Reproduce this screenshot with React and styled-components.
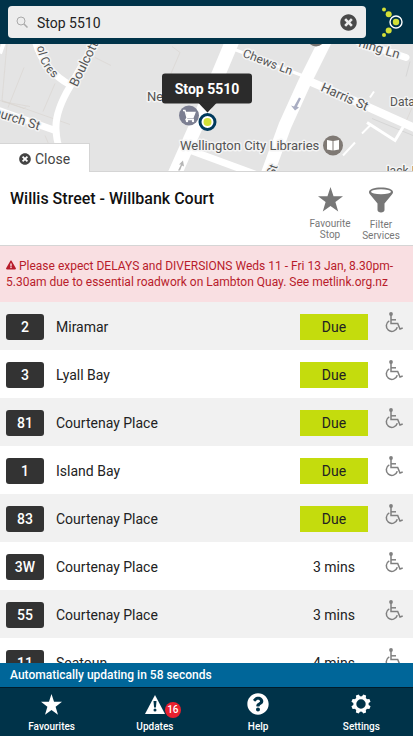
import React, { useState } from 'react'
import styled, { createGlobalStyle } from 'styled-components'
import { FaTimesCircle, FaExclamationTriangle, FaQuestionCircle } from 'react-icons/fa'

const departures = [
    { service: '2', destination: 'Miramar', time: 'Due' },
    { service: '3', destination: 'Lyall Bay', time: 'Due' },
    { service: '81', destination: 'Courtenay Place', time: 'Due' },
    { service: '1', destination: 'Island Bay', time: 'Due' },
    { service: '83', destination: 'Courtenay Place', time: 'Due' },
    { service: '3W', destination: 'Courtenay Place', time: '3 mins' },
    { service: '55', destination: 'Courtenay Place', time: '3 mins' },
    { service: '11', destination: 'Seatoun', time: '4 mins' },
]

function StarIcon({ size }) {
    return (
        <svg width={size} height={size} viewBox="0 0 24 24" fill="currentColor" aria-hidden="true">
            <path d="M12 0l2.900 8.900H24l-7.300 5.600 2.700 9.100L12 18.200l-7.400 5.400 2.700-9.100L0 8.900h9.100z" />
        </svg>
    )
}

function FunnelIcon() {
    return (
        <svg width="26" height="26" viewBox="0 0 26 26" aria-hidden="true">
            <path d="M1 5C1 2.500 6 .5 13 .5S25 2.500 25 5c0 1.300-.6 2-1.500 3l-7 8.500V23c0 1.500-1.500 2.500-3.500 2.500S9.500 24.500 9.500 23v-6.500l-7-8.500C1.600 7 1 6.300 1 5z" fill="currentColor" />
            <ellipse cx="13" cy="4.700" rx="10" ry="2.500" fill="#fff" />
        </svg>
    )
}

function WheelchairIcon() {
    return (
        <svg width="18" height="21" viewBox="0 0 18 21" fill="none" stroke="currentColor" strokeWidth="1.500" role="img" aria-label="Wheelchair accessible">
            <circle cx="6" cy="2" r="1.900" fill="currentColor" stroke="none" />
            <path d="M6 3v8.500h6.700l2.300 5.500 2.700-1" />
            <path d="M6 7.800h5" />
            <path d="M4.300 8.800a5.600 5.600 0 1 0 8 6.500" />
        </svg>
    )
}

function WarningIcon() {
    return (
        <svg width="20" height="19" viewBox="0 0 20 19" aria-hidden="true">
            <path d="M10 0l10 19H0z" fill="currentColor" />
            <path d="M8.500 6h3l-.6 6.500H9.100z" fill="#003349" />
            <circle cx="10" cy="15" r="1.500" fill="#003349" />
        </svg>
    )
}

function GearIcon() {
    return (
        <svg width="20" height="20" viewBox="-10 -10 20 20" aria-hidden="true">
            <circle r="6.200" fill="none" stroke="currentColor" strokeWidth="3" />
            {[22.5, 67.5, 112.5, 157.5, 202.5, 247.5, 292.5, 337.5].map((angle) => (
                <path key={angle} d="M-2.200-7l.7-2.700h3l.7 2.700z" fill="currentColor" transform={`rotate(${angle})`} />
            ))}
        </svg>
    )
}

function SearchIcon() {
    return (
        <svg width="12" height="12" viewBox="0 0 12 12" fill="none" stroke="#aaa" aria-hidden="true">
            <circle cx="5" cy="5" r="4" />
            <path d="M8 8l3.500 3.500" strokeWidth="1.500" />
        </svg>
    )
}

function Logo() {
    return (
        <svg width="22" height="32" viewBox="0 0 22 32" aria-hidden="true">
            <g fill="#d3e037">
                <circle cx="3" cy="3.500" r="2" />
                <circle cx="7.700" cy="8.300" r="3" />
                <circle cx="15" cy="16" r="3.200" />
                <circle cx="7.700" cy="24.500" r="3" />
                <circle cx="3" cy="29" r="2" />
            </g>
            <circle cx="15" cy="16" r="6" fill="none" stroke="#fff" strokeWidth="1.400" />
        </svg>
    )
}

function StopMap() {
    return (
        <MapSvg viewBox="0 44 413 128" preserveAspectRatio="xMidYMid slice" role="img" aria-label="Map">
            <rect y="44" width="413" height="128" fill="#e4e4e4" />

            <g fill="none" stroke="#d9d4ce">
                <path d="M0 101l24 8 2-2M7 44L2 101l68 24M24 68l-16 40M2 102l28 5M40 44l-5 10M95 58l16 8M172 47l8 6-12 28M45 136l6 14M55 84l-12 28M413 106l-7 16" opacity=".6" />
                <path d="M372 119l41 17M410 62l-4 15" stroke="#d6d6d6" />
            </g>

            <g fill="none" stroke="#fff">
                <path d="M97 40L70 87Q55 112 56 130T62 150" strokeWidth="7" />
                <path d="M35 40Q42 70 71 86" strokeWidth="7" />
                <path d="M0 54l5-14" strokeWidth="4" />
                <path d="M-4 110L58 132" strokeWidth="7" />
                <path d="M233 40L207 102 174 176" strokeWidth="14" />
                <path d="M326 40L304 84 285 126 266 178" strokeWidth="13" />
                <path d="M310 82l28 12 80 36" strokeWidth="8" />
                <path d="M232 49l70 27" strokeWidth="3" />
                <path d="M358 42l48 16" strokeWidth="7" strokeLinecap="round" />
                <path d="M188 150l68 25" strokeWidth="7" />
                <path d="M367 123l28 18 9-15" strokeWidth="3" />
                <path d="M343 156l12-13M362 134l9-9M370 98l4-6" strokeWidth="2" />
            </g>

            <path d="M299 98l-5 9-3-1 4 5 4-3-2-1 4-8z" fill="#a9adc2" />
            <path d="M178 171l3-6-2 0 4-4 1 6-2-1-2 5z" fill="#b5b5b5" />

            <MapLabels>
                <path id="crescent" d="M37 47Q40 70 58 82" fill="none" stroke="none" />
                <text transform="translate(77 88) rotate(-64)" fontSize="13">Boulcott</text>
                <text fontSize="12"><textPath href="#crescent">ol Cres</textPath></text>
                <text transform="translate(-7 116) rotate(18)" fontSize="13">hurch St</text>
                <text transform="translate(242 57) rotate(21)" fontSize="12">Chews Ln</text>
                <text transform="translate(320 91) rotate(24)" fontSize="13">Harris St</text>
                <text transform="translate(358 47) rotate(17)" fontSize="13">ning Ln</text>
                <text transform="translate(274 177) rotate(-70)" fontSize="12">St</text>
                <text x="147" y="101" fontSize="13">New</text>
                <text x="390" y="106" fontSize="12">Datacom</text>
                <text x="180" y="150" fontSize="13">Wellington City Libraries</text>
                <text x="383" y="175" fontSize="12">Jack Ilott</text>
            </MapLabels>

            <circle cx="316" cy="38" r="9" fill="#777370" />
            <circle cx="189" cy="116" r="10" fill="#7c7f92" />
            <path d="M183 111h2l2 7h6l2-5h-9M187 118l-1 2h8" fill="none" stroke="#fff" strokeWidth="1.300" />
            <path d="M186 113h9l-2 5h-6z" fill="#fff" />
            <circle cx="187" cy="121.500" r="1.200" fill="#fff" />
            <circle cx="193" cy="121.500" r="1.200" fill="#fff" />
            <circle cx="333" cy="146" r="10" fill="#7f7974" />
            <path d="M327 140.500l5.500 1v9.500l-5.500-1zM339 140.500l-5.500 1v9.500l5.500-1z" fill="#fff" />

            <circle cx="207.500" cy="122.500" r="7.500" fill="#fff" stroke="#003a5d" strokeWidth="3" />
            <circle cx="207.500" cy="122.500" r="4" fill="#d3e037" />
            <rect x="162" y="74" width="90" height="30" rx="3" fill="#2b2b2b" />
            <path d="M198 103l9.500 10 9.500-10z" fill="#2b2b2b" />
            <TooltipText x="207" y="94">Stop 5510</TooltipText>
        </MapSvg>
    )
}

function App() {
    const [stop, setStop] = useState('Stop 5510')

    return (
        <>
            <GlobalStyle />
            <Screen>
                <Header>
                    <SearchBox>
                        <SearchIcon />
                        <SearchInput aria-label="Search" value={stop} onChange={(e) => setStop(e.target.value)} />
                        <ClearButton aria-label="Clear" onClick={() => setStop('')}>
                            <FaTimesCircle size={17} />
                        </ClearButton>
                    </SearchBox>
                    <Logo />
                </Header>

                <MapArea>
                    <StopMap />
                    <CloseButton>
                        <FaTimesCircle size={12} />
                        Close
                    </CloseButton>
                </MapArea>

                <StopHeader>
                    <h1>Willis Street - Willbank Court</h1>
                    <StopAction>
                        <StarIcon size={25} />
                        Favourite Stop
                    </StopAction>
                    <StopAction>
                        <FunnelIcon />
                        Filter Services
                    </StopAction>
                </StopHeader>

                <Alert>
                    <FaExclamationTriangle size={10} /> Please expect DELAYS and DIVERSIONS Weds 11 - Fri 13 Jan, 8.30pm-5.30am due to essential roadwork on Lambton Quay. See metlink.org.nz
                </Alert>

                <Departures>
                    <DepartureTable aria-label="Departures">
                        <tbody>
                            {departures.map(({ service, destination, time }) => (
                                <DepartureRow key={service}>
                                    <ServiceCell><ServiceBadge>{service}</ServiceBadge></ServiceCell>
                                    <td>{destination}</td>
                                    <TimeCell><Time $due={time === 'Due'}>{time}</Time></TimeCell>
                                    <AccessCell><WheelchairIcon /></AccessCell>
                                </DepartureRow>
                            ))}
                        </tbody>
                    </DepartureTable>
                </Departures>

                <UpdateBar>Automatically updating in 58 seconds</UpdateBar>

                <Nav>
                    <NavLink href="#favourites">
                        <NavIcon><StarIcon size={21} /></NavIcon>
                        Favourites
                    </NavLink>
                    <NavLink href="#updates">
                        <NavIcon>
                            <WarningIcon />
                            <CountBadge>16</CountBadge>
                        </NavIcon>
                        Updates
                    </NavLink>
                    <NavLink href="#help">
                        <NavIcon><FaQuestionCircle size={22} /></NavIcon>
                        Help
                    </NavLink>
                    <NavLink href="#settings">
                        <NavIcon><GearIcon /></NavIcon>
                        Settings
                    </NavLink>
                </Nav>
            </Screen>
        </>
    )
}

const GlobalStyle = createGlobalStyle`
    * {
        box-sizing: border-box;
    }
    body {
        margin: 0;
        font-family: Roboto, sans-serif;
        font-size: 14px;
        color: #222;
        background: #fff;
    }
    button, input {
        font: inherit;
        color: inherit;
        border: 0;
        padding: 0;
        background: none;
    }
    svg {
        flex-shrink: 0;
    }
`;

const Screen = styled.div`
    display: flex;
    flex-direction: column;
    height: 100vh;
    overflow: hidden;
`;

const Header = styled.header`
    display: flex;
    align-items: center;
    gap: 15px;
    padding: 6px 10px 6px 8px;
    height: 44px;
    flex-shrink: 0;
    background: #003349;
`;

const SearchBox = styled.div`
    display: flex;
    align-items: center;
    flex: 1;
    gap: 9px;
    height: 32px;
    padding: 0 9px 0 8px;
    border-radius: 4px;
    background: #ededed;
`;

const SearchInput = styled.input`
    flex: 1;
    min-width: 0;
    height: 32px;
    padding-top: 2px;
    outline: none;
`;

const ClearButton = styled.button`
    display: flex;
    color: #4a4a4a;
`;

const MapArea = styled.section`
    position: relative;
    height: 128px;
    flex-shrink: 0;
    border-bottom: 1px solid #d5d5d5;
`;

const MapSvg = styled.svg`
    display: block;
    width: 100%;
    height: 100%;
`;

const MapLabels = styled.g`
    fill: #555;
    stroke: #f4f4f4;
    stroke-width: 3px;
    stroke-linejoin: round;
    paint-order: stroke;
`;

const TooltipText = styled.text`
    fill: #fff;
    font-size: 14px;
    font-weight: 700;
    text-anchor: middle;
`;

const CloseButton = styled.button`
    position: absolute;
    left: 0;
    bottom: -1px;
    display: flex;
    align-items: center;
    justify-content: center;
    gap: 4px;
    width: 90px;
    height: 29px;
    padding-top: 2px;
    border-top: 1px solid #d5d5d5;
    border-right: 1px solid #d5d5d5;
    background: #fff;
    color: #444;
`;

const StopHeader = styled.section`
    display: flex;
    align-items: flex-start;
    gap: 5px;
    padding: 15px 9px 4px 10px;
    height: 74px;
    flex-shrink: 0;
    border-bottom: 1px solid #d5d5d5;
    h1{
        flex: 1;
        margin: 0;
        font-size: 16px;
        line-height: 24px;
        font-weight: 500;
        color: #111;
    }
`;

const StopAction = styled.button`
    display: flex;
    flex-direction: column;
    align-items: center;
    gap: 6px;
    width: 46px;
    font-size: 10px;
    line-height: 11px;
    color: #777;
`;

const Alert = styled.p`
    margin: 0;
    padding: 12px 6px;
    flex-shrink: 0;
    font-size: 12px;
    line-height: 16px;
    color: #b81c2b;
    background: #f9dfe2;
`;

const Departures = styled.main`
    flex: 1;
    min-height: 0;
    overflow: hidden;
`;

const DepartureTable = styled.table`
    width: 100%;
    border-collapse: collapse;
`;

const DepartureRow = styled.tr`
    height: 48px;
    &:nth-child(odd){
        background: #f1f1f1;
    }
    td{
        padding: 2px 0 0;
    }
`;

const ServiceCell = styled.td`
    width: 56px;
`;

const ServiceBadge = styled.span`
    display: block;
    width: 38px;
    margin-left: 6px;
    border-radius: 3px;
    background: #333;
    color: #fff;
    font-weight: 500;
    line-height: 26px;
    text-align: center;
`;

const TimeCell = styled.td`
    width: 68px;
`;

const Time = styled.span`
    display: block;
    line-height: 26px;
    text-align: center;
    background: ${({ $due }) => ($due ? '#c4dc0d' : 'transparent')};
`;

const AccessCell = styled.td`
    width: 45px;
    vertical-align: top;
    color: #808080;
    svg{
        display: block;
        margin: 8px 0 0 17px;
    }
`;

const UpdateBar = styled.div`
    flex-shrink: 0;
    padding: 1px 10px 0;
    font-size: 12px;
    font-weight: 500;
    line-height: 23px;
    color: #fff;
    background: #006699;
`;

const Nav = styled.nav`
    display: grid;
    grid-template-columns: repeat(4, 1fr);
    flex-shrink: 0;
    height: 49px;
    border-top: 1px solid #001c2b;
    background: #003349;
`;

const NavLink = styled.a`
    display: flex;
    flex-direction: column;
    align-items: center;
    gap: 6px;
    padding-top: 5px;
    font-size: 10px;
    font-weight: 500;
    line-height: 12px;
    color: #fff;
    text-decoration: none;
`;

const NavIcon = styled.span`
    position: relative;
    display: flex;
    align-items: center;
    height: 22px;
`;

const CountBadge = styled.span`
    position: absolute;
    top: 9px;
    left: 20px;
    width: 16px;
    height: 16px;
    border-radius: 50%;
    background: #e8202e;
    font-size: 10px;
    line-height: 16px;
    text-align: center;
`;

export default App
